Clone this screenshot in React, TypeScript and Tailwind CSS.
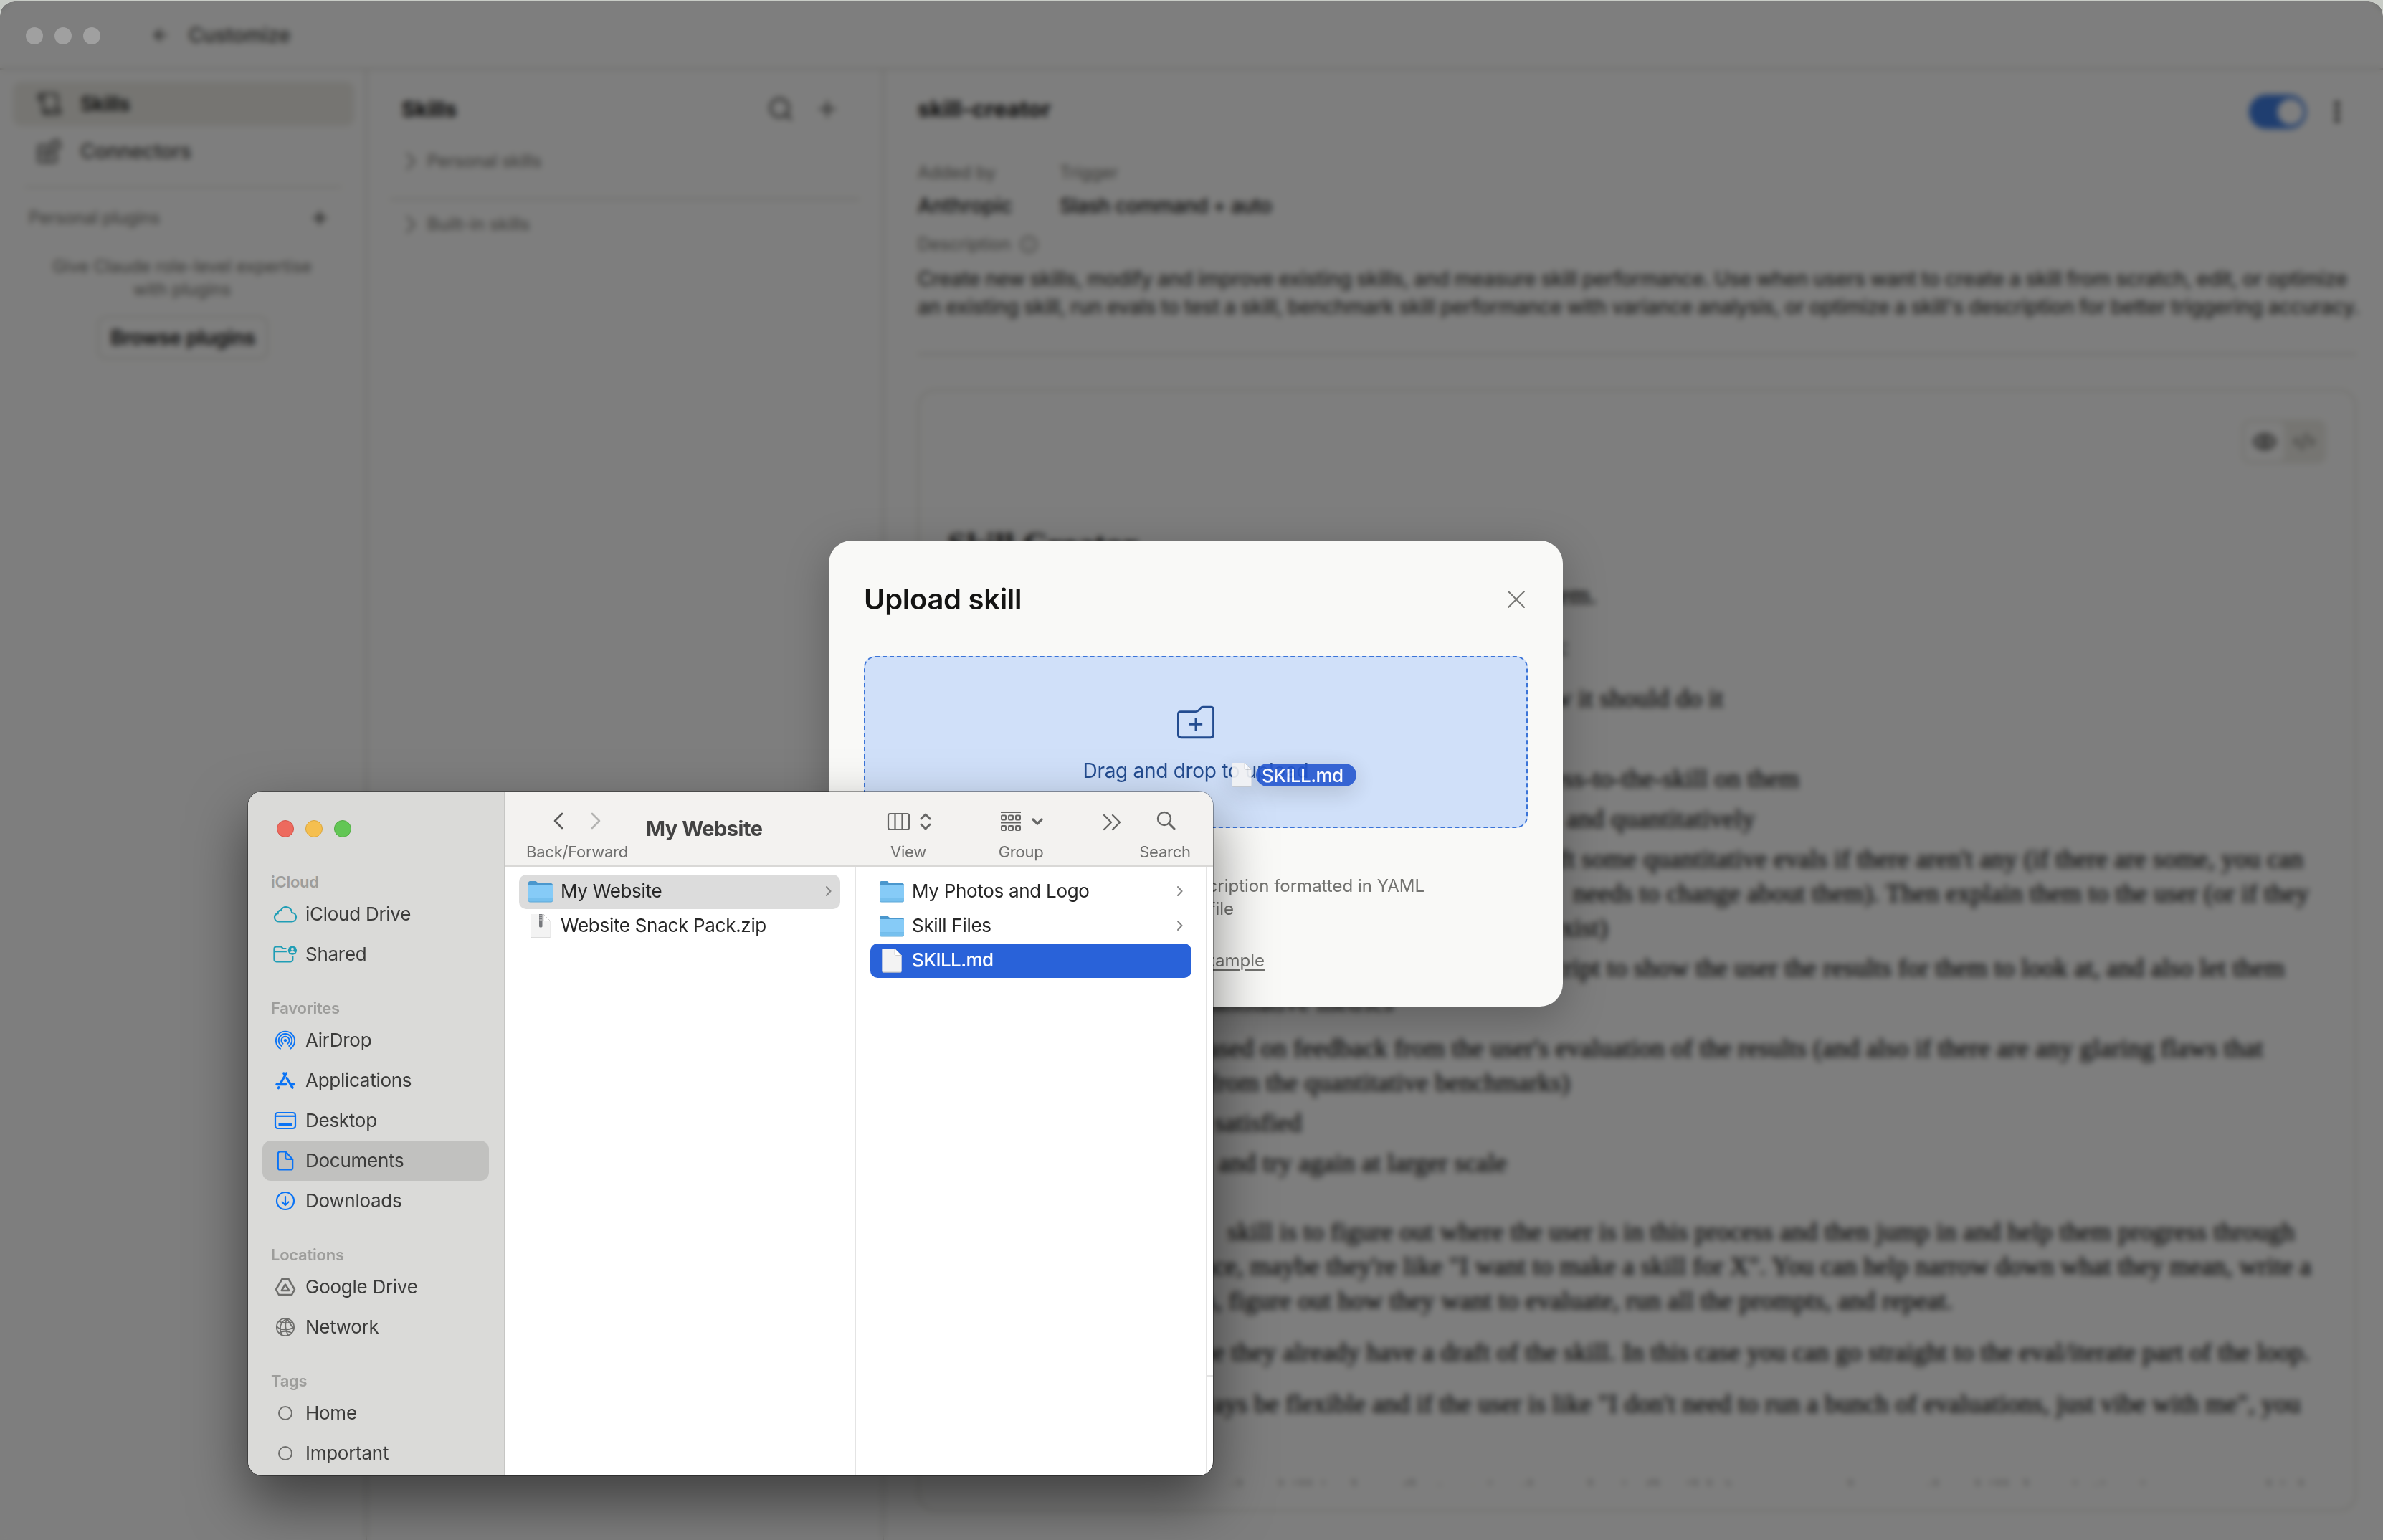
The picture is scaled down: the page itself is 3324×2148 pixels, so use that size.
import { ReactNode } from 'react';
import { ArrowLeft, CodeXml, EllipsisVertical, Eye, Info, Plus, Search } from 'lucide-react';

const serif = "font-['Liberation_Serif',serif]";

interface SidebarItem {
    label: string;
    icon: ReactNode;
    selected?: boolean;
}

interface DocLine {
    text: string;
    // right edge of the line, measured from the right side of the card
    end: string;
    gap?: string;
}

const docLines: DocLine[] = [
    { text: 'improving them.', end: 'pr-[1058px]' },
    { text: 'this:', end: 'pr-[1097px]', gap: 'mt-6' },
    { text: 'roughly how it should do it', end: 'pr-[881px]', gap: 'mt-6' },
    { text: 'claude-with-access-to-the-skill on them', end: 'pr-[775px]', gap: 'mt-16' },
    { text: 'and quantitatively', end: 'pr-[837px]', gap: 'mt-2' },
    { text: "draft some quantitative evals if there aren't any (if there are some, you can", end: 'pr-[72px]', gap: 'mt-2' },
    { text: 'needs to change about them). Then explain them to the user (or if they', end: 'pr-[64px]' },
    { text: 'already exist)', end: 'pr-[1042px]' },
    { text: 'script to show the user the results for them to look at, and also let them', end: 'pr-[98px]', gap: 'mt-2' },
    { text: 'quantitative metrics', end: 'pr-[1341px]' },
    {
        text: "based on feedback from the user's evaluation of the results (and also if there are any glaring flaws that",
        end: 'pr-[128px]',
        gap: 'mt-4',
    },
    { text: 'from the quantitative benchmarks)', end: 'pr-[1095px]' },
    { text: 'satisfied', end: 'pr-[1469px]', gap: 'mt-2' },
    { text: 'and try again at larger scale', end: 'pr-[1183px]', gap: 'mt-2' },
    {
        text: 'skill is to figure out where the user is in this process and then jump in and help them progress through',
        end: 'pr-[84px]',
        gap: 'mt-12',
    },
    {
        text: 'instance, maybe they\'re like "I want to make a skill for X". You can help narrow down what they mean, write a',
        end: 'pr-[61px]',
    },
    { text: 'cases, figure out how they want to evaluate, run all the prompts, and repeat.', end: 'pr-[561px]' },
    {
        text: 'maybe they already have a draft of the skill. In this case you can go straight to the eval/iterate part of the loop.',
        end: 'pr-[63px]',
        gap: 'mt-6',
    },
    {
        text: 'always be flexible and if the user is like "I don\'t need to run a bunch of evaluations, just vibe with me", you',
        end: 'pr-[76px]',
        gap: 'mt-6',
    },
];

const CloudIcon = () => (
    <svg width="34" height="34" viewBox="0 0 34 34" fill="none" stroke="#1f9db5" strokeWidth="2.2">
        <path d="M8.5 27.5C4.600 27.500 2 25 2 21.700C2 18.800 4 16.600 6.600 16.200C6.300 13.500 8.200 11.700 10.700 12C12 8.800 14.800 7 18 7C22.600 7 26 10.500 26.200 15C29.600 15.300 32 17.900 32 21.200C32 24.800 29.400 27.500 25.800 27.500Z" />
    </svg>
);

const SharedIcon = () => (
    <svg width="36" height="34" viewBox="0 0 36 34" fill="none" stroke="#1f9db5" strokeWidth="2.2">
        <path d="M19.5 8.500H14.500L12.500 6.500C12 6 11.500 5.800 10.800 5.800H4.500C2.500 5.800 1.500 7 1.500 9V24.500C1.500 26.800 2.700 28 5 28H25.500C27.800 28 29 26.800 29 24.500V20" />
        <path d="M1.500 13H20" />
        <circle cx="28.500" cy="11.300" r="6.500" fill="#1f9db5" stroke="none" />
        <circle cx="28.500" cy="9.300" r="2.100" fill="#dadad8" stroke="none" />
        <path d="M24.800 15C25.300 11.800 31.700 11.800 32.200 15Z" fill="#dadad8" stroke="none" />
    </svg>
);

const AirDropIcon = () => (
    <svg width="34" height="34" viewBox="0 0 34 34" fill="none" stroke="#0a73f5" strokeWidth="1.900" strokeLinecap="round">
        <path d="M10 28.800A13.100 13.100 0 1 1 24 28.800" />
        <path d="M11.800 25A9.300 9.300 0 1 1 22.200 25" />
        <path d="M13.600 21.700A5.600 5.600 0 1 1 20.400 21.700" />
        <circle cx="17" cy="17.200" r="2.100" fill="#0a73f5" stroke="none" />
    </svg>
);

const AppsIcon = () => (
    <svg width="34" height="34" viewBox="0 0 34 34" fill="none" stroke="#0a73f5" strokeWidth="3.400" strokeLinecap="round">
        <path d="M18.500 7L10 21.500" />
        <path d="M14.800 7L16.500 9.500" />
        <path d="M19 13.500L27 27.200" />
        <path d="M5 22.500H18" />
        <path d="M25 22.500H29" />
        <path d="M7.800 26.800L7.300 27.600" />
    </svg>
);

const DesktopIcon = () => (
    <svg width="34" height="34" viewBox="0 0 34 34" fill="none" stroke="#0a73f5" strokeWidth="2.200">
        <rect x="3" y="6" width="28" height="22" rx="3.500" />
        <path d="M3 10.800H31" />
        <rect x="7.500" y="20.500" width="19" height="4" rx="1" fill="#0a73f5" stroke="none" />
    </svg>
);

const DocIcon = () => (
    <svg width="34" height="34" viewBox="0 0 34 34" fill="none" stroke="#0a73f5" strokeWidth="2.200" strokeLinejoin="round">
        <path d="M16.500 4.500H9.500C7.700 4.500 6.800 5.500 6.800 7.300V26.700C6.800 28.500 7.700 29.500 9.500 29.500H24.500C26.300 29.500 27.200 28.500 27.200 26.700V15L17.500 4.500Z" />
        <path d="M17.300 5V12.500C17.300 14 18 14.800 19.500 14.800H27" />
    </svg>
);

const DownloadsIcon = () => (
    <svg width="34" height="34" viewBox="0 0 34 34" fill="none" stroke="#0a73f5" strokeWidth="2.200" strokeLinecap="round" strokeLinejoin="round">
        <circle cx="17" cy="17" r="12" />
        <path d="M17 11V22.500M12.500 18.500L17 23L21.500 18.500" />
    </svg>
);

const DriveIcon = () => (
    <svg width="34" height="34" viewBox="0 0 34 34" fill="none" stroke="#6e6e6c" strokeWidth="2.500" strokeLinejoin="round">
        <path d="M12.500 6H21.500L30 20.500L26 28H8L4 20.500Z" />
        <path d="M17 13.500L22.200 22H11.800Z" />
    </svg>
);

const NetworkIcon = () => (
    <svg width="34" height="34" viewBox="0 0 34 34" fill="none" stroke="#6e6e6c" strokeWidth="1.700">
        <circle cx="17" cy="17" r="12.200" />
        <path d="M8 9C13 12 22 11.500 27 10M5 16C10 22 22 22 29 17M8 25.500C13 22 20 22.500 26 25M19.500 5C9 10 8 20 12.500 28M19.500 5C16 12 17 22 21 28.500M19.500 5C22 10 24 14 29 19" />
    </svg>
);

const TagIcon = () => <span className="size-5 rounded-full border-2 border-[#6e6e6c]" />;

const FolderIcon = () => (
    <svg width="36" height="36" viewBox="0 0 36 36">
        <path d="M1 5.500C1 4 2 3 3.500 3H11.500L15 6H32.500C34 6 35 7 35 8.500V20H1Z" fill="#4a97cd" />
        <path d="M1 9.500H35V30C35 31.700 34.200 32.500 32.500 32.500H3.500C1.800 32.500 1 31.700 1 30Z" fill="#5fa9d8" />
        <path d="M1 9.200C1 8.400 1.500 8 2.300 8H33.700C34.500 8 35 8.400 35 9.200V26.500H1Z" fill="#86cbf7" />
        <path d="M1 26.500H35V29.500C35 30.800 34.200 31.500 32.800 31.500H3.200C1.800 31.500 1 30.800 1 29.500Z" fill="#76c0ee" />
    </svg>
);

const FileIcon = ({ zip = false }: { zip?: boolean }) => (
    <svg width="36" height="36" viewBox="0 0 36 36">
        <path d="M4.500 3C4.500 2 5 1.500 6 1.500H22L31.500 11V33C31.500 34.200 31 34.700 30 34.700H6C5 34.700 4.500 34.200 4.500 33Z" fill="#c4c4c4" />
        <path d="M4.500 2.500C4.500 1.500 5 1 6 1H22L31.500 10.500V32C31.500 33 31 33.500 30 33.500H6C5 33.500 4.500 33 4.500 32Z" fill="#f3f3f3" />
        <path d="M22 1V9C22 10 22.500 10.500 23.500 10.500H31.500Z" fill="#ffffff" stroke="#cfcfcf" strokeWidth="1" />
        {zip && (
            <g>
                <path d="M16 1H20.500V18C20.500 20 16 20 16 18Z" fill="#77797d" />
                <path d="M16.500 3H20M16.500 6H20M16.500 9H20" stroke="#e5e5e5" strokeWidth="1.200" />
            </g>
        )}
    </svg>
);

const sections: { title: string; items: SidebarItem[] }[] = [
    {
        title: 'iCloud',
        items: [
            { label: 'iCloud Drive', icon: <CloudIcon /> },
            { label: 'Shared', icon: <SharedIcon /> },
        ],
    },
    {
        title: 'Favorites',
        items: [
            { label: 'AirDrop', icon: <AirDropIcon /> },
            { label: 'Applications', icon: <AppsIcon /> },
            { label: 'Desktop', icon: <DesktopIcon /> },
            { label: 'Documents', icon: <DocIcon />, selected: true },
            { label: 'Downloads', icon: <DownloadsIcon /> },
        ],
    },
    {
        title: 'Locations',
        items: [
            { label: 'Google Drive', icon: <DriveIcon /> },
            { label: 'Network', icon: <NetworkIcon /> },
        ],
    },
    {
        title: 'Tags',
        items: [
            { label: 'Home', icon: <TagIcon /> },
            { label: 'Important', icon: <TagIcon /> },
        ],
    },
];

const ScrollIcon = () => (
    <svg width="34" height="34" viewBox="0 0 34 34" fill="none" stroke="currentColor" strokeWidth="2.200" strokeLinejoin="round">
        <path d="M8 11H2V6C2 4 3 3 5 3H25C27 3 28 4 28 6V25" />
        <path d="M8 4V27C8 29.500 9.500 31 12 31H29C31 31 32 29.500 32 28V25H13V28C13 30 12.500 31 11.500 31" />
    </svg>
);

const ConnectorsIcon = () => (
    <svg width="34" height="34" viewBox="0 0 34 34" fill="none" stroke="currentColor" strokeWidth="2.600" strokeLinejoin="round">
        <path d="M2 9H14V20H26V32H2ZM2 20H14V32" />
        <path d="M19 5L29 1L32 11L22 15Z" />
    </svg>
);

const GroupChevron = () => (
    <svg width="14" height="26" viewBox="0 0 14 26" fill="none" stroke="currentColor" strokeWidth="2.200" strokeLinecap="round">
        <path d="M2 2L12 13L2 24" />
    </svg>
);

const CustomizeApp = () => (
    <div className="flex h-[2146px] flex-col bg-[#fdfdfc] text-[#141413]">
        <header className="flex h-[95px] shrink-0 items-center border-b-2 border-[#d3d2cd] pl-[211px] text-[#3d3d3a]">
            <ArrowLeft size={26} strokeWidth={2.3} />
            <span className="ml-[26px] text-[28px] font-medium">Customize</span>
        </header>
        <div className="flex min-h-0 flex-1">
            <aside className="flex w-[512px] shrink-0 flex-col border-r-2 border-[#d3d2cd] px-[18px] pt-[17px]">
                <div className="flex h-[62px] w-[476px] items-center gap-[26px] rounded-xl bg-[#ecebe5] pl-[34px] text-[28px] font-semibold">
                    <ScrollIcon />
                    <span className="tracking-[-0.4px]">Skills</span>
                </div>
                <div className="mt-1 flex h-[62px] items-center gap-[26px] pl-[34px] text-[28px] font-medium text-[#3d3d3a]">
                    <ConnectorsIcon />
                    <span className="tracking-[-0.1px]">Connectors</span>
                </div>
                <div className="mx-4 mt-[18px] h-0.5 bg-[#dddcd6]" />
                <div className="mt-6 flex h-9 items-center justify-between pr-8 pl-[22px] text-2xl text-[#73726c]">
                    <span className="tracking-[-0.3px]">Personal plugins</span>
                    <Plus size={28} strokeWidth={2.6} className="text-[#3d3d3a]" />
                </div>
                <p className="mt-[34px] pr-0.5 text-center text-2xl leading-8 text-[#73726c]">
                    Give Claude role-level expertise
                    <br />
                    with plugins
                </p>
                <div className="mt-[21px] ml-[118px] flex h-[60px] w-[238px] items-center justify-center rounded-xl border-2 border-[#dddcd6] text-[28px] font-semibold tracking-[-0.4px] whitespace-nowrap">
                    Browse plugins
                </div>
            </aside>
            <section className="flex w-[721px] shrink-0 flex-col border-r-2 border-[#d3d2cd] pt-[33px]">
                <div className="flex h-11 items-center pr-[59px] pl-[48px]">
                    <h2 className="flex-1 text-[30px] font-bold tracking-[-0.2px]">Skills</h2>
                    <Search size={38} strokeWidth={1.8} className="text-[#3d3d3a]" />
                    <Plus size={36} strokeWidth={1.8} className="ml-7 text-[#3d3d3a]" />
                </div>
                <div className="mt-8 flex h-[38px] items-center gap-4 pl-[54px] text-2xl tracking-[-0.15px] text-[#73726c]">
                    <GroupChevron />
                    Personal skills
                </div>
                <div className="mt-[33px] mr-8 ml-8 h-0.5 bg-[#d3d2cd]" />
                <div className="mt-[15px] flex h-[38px] items-center gap-4 pl-[54px] text-2xl text-[#73726c]">
                    <GroupChevron />
                    Built-in skills
                </div>
            </section>
            <main className="flex min-w-0 flex-1 flex-col pr-[37px] pl-[47px]">
                <div className="mt-[32px] flex h-[54px] items-center pr-2">
                    <h1 className="flex-1 pb-2 text-[31px] font-bold tracking-[0.1px]">skill-creator</h1>
                    <div className="flex h-12 w-20 items-center justify-end rounded-full bg-[#3e7ce0] p-1">
                        <div className="size-9 rounded-full bg-white" />
                    </div>
                    <EllipsisVertical size={38} strokeWidth={2.2} className="ml-6" />
                </div>
                <div className="mt-10 flex text-2xl text-[#73726c]">
                    <div className="w-[198px]">
                        <div className="h-9 leading-9">Added by</div>
                        <div className="mt-2.5 text-[28px] leading-9 font-medium tracking-[0.2px] text-[#141413]">Anthropic</div>
                    </div>
                    <div>
                        <div className="h-9 leading-9">Trigger</div>
                        <div className="mt-2.5 text-[28px] leading-9 font-medium tracking-[-0.5px] text-[#141413]">Slash command + auto</div>
                    </div>
                </div>
                <div className="mt-[18px] flex h-9 items-center gap-3 text-2xl text-[#73726c]">
                    Description
                    <Info size={26} strokeWidth={1.8} />
                </div>
                <p className="mt-[11px] text-[28px] leading-[39px] font-medium tracking-[-0.33px] whitespace-nowrap text-[#3d3d3a]">
                    Create new skills, modify and improve existing skills, and measure skill performance. Use when users want to create a skill from scratch, edit, or optimize
                    <br />
                    an existing skill, run evals to test a skill, benchmark skill performance with variance analysis, or optimize a skill's description for better triggering accuracy.
                </p>
                <div className="mt-[45px] h-0.5 bg-[#d3d2cd]" />
                <div className="mt-12 flex h-[1565px] flex-col overflow-hidden rounded-3xl border-2 border-[#dddcd6]">
                    <div className="mt-10 mr-10 flex h-[62px] w-[118px] shrink-0 items-center self-end rounded-xl bg-[#ecebe5] p-1 text-[#73726c]">
                        <div className="flex h-full flex-1 items-center justify-center rounded-lg bg-[#fdfdfc] text-[#3d3d3a]">
                            <Eye size={34} strokeWidth={2.4} />
                        </div>
                        <div className="flex flex-1 items-center justify-center">
                            <CodeXml size={32} />
                        </div>
                    </div>
                    <h1 className={`mt-[86px] pl-10 text-[47px] leading-[52px] font-bold tracking-[0.3px] ${serif}`}>Skill Creator</h1>
                    <div
                        className={`mt-[21px] h-[1266px] shrink-0 overflow-hidden text-[36px] leading-[48px] tracking-[0.22px] whitespace-nowrap text-[#141413] [-webkit-text-stroke:0.5px_#141413] ${serif}`}
                    >
                        {docLines.map((line) => (
                            <div key={line.text} className={`flex justify-end ${line.end} ${line.gap ?? ''}`}>
                                <span>{line.text}</span>
                            </div>
                        ))}
                        <div className="mt-[72px] flex justify-end pr-[61px] opacity-40">
                            <span>
                                the skill is done (but again, the order is flexible), you can also run the skill description improver, which
                            </span>
                        </div>
                    </div>
                </div>
            </main>
        </div>
    </div>
);

const UploadDialog = () => (
    <div className="absolute top-[754px] left-[1156px] flex h-[650px] w-[1024px] flex-col rounded-[32px] bg-[#f9f9f7] px-[49px] pt-[58px] shadow-[0_16px_60px_rgba(0,0,0,0.25)]">
        <div className="flex h-12 items-center justify-between pr-1">
            <h2 className="text-[40px] font-semibold tracking-[-0.3px] text-[#141413]">Upload skill</h2>
            <svg width="24" height="24" viewBox="0 0 24 24" stroke="#777774" strokeWidth="2" strokeLinecap="round">
                <path d="M1 1L23 23M23 1L1 23" />
            </svg>
        </div>
        <div className="mt-[55px] flex h-60 flex-col items-center rounded-2xl border-2 border-dashed border-[#3b74d8] bg-[#d0e0f9] pt-[67px] text-[#234c90]">
            <svg width="52" height="47" viewBox="0 0 54 48" fill="none" stroke="currentColor" strokeWidth="3" strokeLinejoin="round">
                <path d="M5 8.500H27C29 8.500 30 8 31 6.800L34 3.500C35 2.300 36 2 37.500 2H48.500C51 2 52.500 3.500 52.500 6V42C52.500 44.500 51 46 48.500 46H5.500C3 46 1.500 44.500 1.500 42V12C1.500 9.800 3 8.500 5 8.500Z" />
                <path d="M27 17.500V36.500M17.500 27H36.500" />
            </svg>
            <span className="mt-6 text-[28px] leading-10 tracking-[-0.3px]">Drag and drop to upload</span>
        </div>
        <div className="mt-[65px] flex flex-col text-2xl leading-8 text-[#737370]">
            <span className="self-end pr-36">description formatted in YAML</span>
            <span className="self-end pr-[410px]">SKILL.md file</span>
            <span className="mt-10 self-end pr-[367px]">
                <span className="underline underline-offset-4">example</span>
            </span>
        </div>
    </div>
);

interface FileRowProps {
    name: string;
    icon: ReactNode;
    tone?: 'none' | 'gray' | 'blue';
    chevron?: boolean;
}

const FileRow = ({ name, icon, tone = 'none', chevron = false }: FileRowProps) => {
    const tones = {
        none: 'text-[#262626] tracking-[-0.3px]',
        gray: 'bg-[#dcdcdc] text-[#262626] tracking-[-0.3px]',
        blue: 'bg-[#2962d9] text-white font-medium tracking-[-0.6px]',
    };
    return (
        <div className={`flex h-12 items-center rounded-[10px] pr-[11px] pl-3 text-[26px] ${tones[tone]}`}>
            {icon}
            <span className="ml-2.5 flex-1 pb-[3px] whitespace-nowrap">{name}</span>
            {chevron && (
                <svg width="10" height="16" viewBox="0 0 10 16" fill="none" stroke="#858585" strokeWidth="2" strokeLinecap="round" className="mb-0.5">
                    <path d="M2 2L7.500 8L2 14" />
                </svg>
            )}
        </div>
    );
};

const FinderToolbar = () => (
    <div className="flex h-[105px] shrink-0 border-b-2 border-[#d9d8d6] bg-[#f3f2f0] text-[22px] leading-7 tracking-[-0.25px] text-[#6f6f6e]">
        <div className="ml-[29px] flex w-[144px] flex-col items-center pt-[29px] whitespace-nowrap">
            <div className="flex h-[30px] gap-[38px]">
                <svg width="14" height="24" viewBox="0 0 14 24" fill="none" stroke="#5a5a59" strokeWidth="2.600" strokeLinecap="round" strokeLinejoin="round">
                    <path d="M12 2L2 12L12 22" />
                </svg>
                <svg width="14" height="24" viewBox="0 0 14 24" fill="none" stroke="#b4b4b2" strokeWidth="2.600" strokeLinecap="round" strokeLinejoin="round">
                    <path d="M2 2L12 12L2 22" />
                </svg>
            </div>
            <span className="mt-[11px]">Back/Forward</span>
        </div>
        <div className="ml-6 flex-1 pt-8 text-[29px] leading-10 font-bold tracking-[-0.5px] text-[#434343]">My Website</div>
        <div className="flex w-[62px] flex-col items-center pt-[27px]">
            <div className="flex h-[30px] items-center gap-3.5 pl-0.5">
                <svg width="32" height="28" viewBox="0 0 32 28" fill="none" stroke="#666665" strokeWidth="2.200" className="shrink-0">
                    <rect x="2" y="3" width="29" height="22" rx="2.500" />
                    <path d="M11.500 3V25M21.500 3V25" />
                </svg>
                <svg width="16" height="26" viewBox="0 0 16 26" fill="none" stroke="#666665" strokeWidth="3" strokeLinecap="round" strokeLinejoin="round" className="shrink-0">
                    <path d="M2 9L8 3L14 9M2 17L8 23L14 17" />
                </svg>
            </div>
            <span className="mt-[13px]">View</span>
        </div>
        <div className="ml-[95px] flex w-[62px] flex-col items-center pt-[27px]">
            <div className="flex h-[30px] items-center gap-3.5 pl-0.5">
                <svg width="30" height="30" viewBox="0 0 30 30" fill="none" stroke="#666665" strokeWidth="2" className="shrink-0">
                    <path d="M1 2H29M1 16.500H29" />
                    <rect x="2" y="6.500" width="6" height="6" rx="1" />
                    <rect x="12" y="6.500" width="6" height="6" rx="1" />
                    <rect x="22" y="6.500" width="6" height="6" rx="1" />
                    <rect x="2" y="21" width="6" height="6" rx="1" />
                    <rect x="12" y="21" width="6" height="6" rx="1" />
                    <rect x="22" y="21" width="6" height="6" rx="1" />
                </svg>
                <svg width="16" height="12" viewBox="0 0 16 12" fill="none" stroke="#666665" strokeWidth="3.200" strokeLinecap="round" strokeLinejoin="round" className="shrink-0">
                    <path d="M2 3L8 9L14 3" />
                </svg>
            </div>
            <span className="mt-[13px]">Group</span>
        </div>
        <div className="ml-[83px] pt-[31px]">
            <svg width="26" height="24" viewBox="0 0 26 24" fill="none" stroke="#666665" strokeWidth="2.400" strokeLinecap="round" strokeLinejoin="round">
                <path d="M2 2L12 12L2 22M14 2L24 12L14 22" />
            </svg>
        </div>
        <div className="mr-[31px] ml-[25px] flex w-[72px] flex-col items-center pt-[26px]">
            <div className="flex h-[30px] items-center pl-0.5">
                <svg width="28" height="28" viewBox="0 0 28 28" fill="none" stroke="#666665" strokeWidth="2.400" strokeLinecap="round">
                    <circle cx="12" cy="11" r="9" />
                    <path d="M18.500 17.500L26 25" strokeWidth="3" />
                </svg>
            </div>
            <span className="mt-3.5">Search</span>
        </div>
    </div>
);

const FinderWindow = () => (
    <div className="absolute top-[1104px] left-[346px] flex h-[954px] w-[1346px] overflow-hidden rounded-[20px] bg-white shadow-[0_0_0_1px_rgba(0,0,0,0.35),0_36px_80px_rgba(0,0,0,0.5)]">
        <div className="flex w-[358px] shrink-0 flex-col border-r border-[#c6c6c4] bg-[#dadad8] px-5">
            <div className="flex h-[79px] shrink-0 items-end gap-4 pl-5">
                <span className="mb-[15px] size-6 rounded-full border border-[#d5544a] bg-[#ed6a5e]" />
                <span className="mb-[15px] size-6 rounded-full border border-[#dba63c] bg-[#f5bf4f]" />
                <span className="mb-[15px] size-6 rounded-full border border-[#52ab44] bg-[#62c655]" />
            </div>
            {sections.map((section) => (
                <div key={section.title}>
                    <div className="h-16 pt-8 pl-3 text-[22px] leading-[30px] font-semibold tracking-[-0.25px] text-[#9d9d9b]">{section.title}</div>
                    {section.items.map((item) => (
                        <div
                            key={item.label}
                            className={`flex h-14 w-[316px] items-center rounded-xl pl-[15px] text-[26px] text-[#3c3c3b] ${item.selected ? 'bg-[#c1c1bf]' : ''}`}
                        >
                            <span className="mr-[11px] flex w-[34px] justify-center">{item.icon}</span>
                            <span className="pb-0.5 tracking-[-0.27px]">{item.label}</span>
                        </div>
                    ))}
                </div>
            ))}
        </div>
        <div className="flex flex-1 flex-col">
            <FinderToolbar />
            <div className="flex flex-1">
                <div className="w-[490px] border-r-2 border-[#e4e4e4] pt-[11px] pr-5 pl-5">
                    <FileRow name="My Website" icon={<FolderIcon />} tone="gray" chevron />
                    <FileRow name="Website Snack Pack.zip" icon={<FileIcon zip />} />
                </div>
                <div className="w-[490px] border-r-2 border-[#e4e4e4] pt-[11px] pr-5 pl-5">
                    <FileRow name="My Photos and Logo" icon={<FolderIcon />} chevron />
                    <FileRow name="Skill Files" icon={<FolderIcon />} chevron />
                    <FileRow name="SKILL.md" icon={<FileIcon />} tone="blue" />
                </div>
                <div className="mt-[709px] h-0.5 flex-1 bg-[#e4e4e4]" />
            </div>
        </div>
    </div>
);

const DragGhost = () => (
    <div className="absolute top-[1063px] left-[1714px] flex items-center opacity-90 drop-shadow-[0_8px_16px_rgba(0,0,0,0.18)]">
        <FileIcon />
        <span className="ml-0.5 flex h-8 w-[140px] items-center rounded-full bg-[#2457cf] pl-2 text-[26px] font-medium tracking-[-0.6px] text-white">SKILL.md</span>
    </div>
);

const App = () => {
    return (
        <div className="relative h-[2148px] w-[3324px] overflow-hidden bg-[#c8ccc6] pt-0.5 font-['Inter',sans-serif]">
            <div className="relative h-[2146px] overflow-hidden rounded-t-[20px]">
                <CustomizeApp />
                <div className="absolute inset-0 bg-black/50 backdrop-blur-[4px]" />
                <div className="absolute top-9 left-9 flex gap-4">
                    <span className="size-6 rounded-full bg-[#a0a0a0]" />
                    <span className="size-6 rounded-full bg-[#a0a0a0]" />
                    <span className="size-6 rounded-full bg-[#a0a0a0]" />
                </div>
            </div>
            <UploadDialog />
            <FinderWindow />
            <DragGhost />
        </div>
    );
};

export default App;
